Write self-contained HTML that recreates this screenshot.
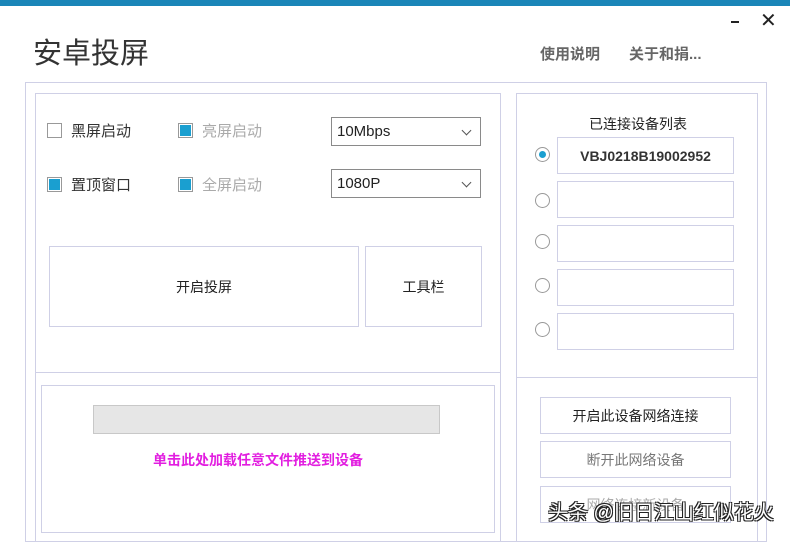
<!DOCTYPE html><html><head><meta charset="utf-8"><style>
*{margin:0;padding:0;box-sizing:border-box}
body{width:790px;height:535px;background:#fff;position:relative;overflow:hidden;font-family:"Liberation Sans","Noto Sans CJK SC",sans-serif;color:#333}
.a{position:absolute}
.b{position:absolute;border:1px solid #cfd0e6}
.cb{position:absolute;width:15px;height:15px;border:1px solid #999;background:#fff}
.cb.on::after{content:"";position:absolute;left:1px;top:1px;width:11px;height:11px;background:#1a9fd0}
.t{position:absolute;font-size:15px;white-space:nowrap}
.combo{position:absolute;border:1px solid #8a8a8a;height:29px;width:150px;font-size:15px;padding:5px 5px;color:#222}
.combo::after{content:"";position:absolute;right:10px;top:9px;width:6px;height:6px;border-right:1.3px solid #555;border-bottom:1.3px solid #555;transform:rotate(45deg)}
.btn{position:absolute;border:1px solid #cfd0e6;display:flex;align-items:center;justify-content:center;font-size:14px;color:#222;background:#fff}
.rad{position:absolute;width:15px;height:15px;border:1px solid #999;border-radius:50%;left:535px}
.tb{position:absolute;left:557px;width:177px;height:37px;border:1px solid #cfd0e6}
</style></head><body>
<div class="a" style="left:0;top:0;width:790px;height:6px;background:#1a86b8"></div>
<div class="t" style="left:33px;top:30px;font-size:29px;color:#333">安卓投屏</div>
<div class="t" style="left:540px;top:43px;font-size:15px;color:#666;font-weight:bold">使用说明</div>
<div class="t" style="left:629px;top:43px;font-size:15px;color:#666;font-weight:bold">关于和捐...</div>
<div class="a" style="left:731px;top:21px;width:8px;height:2px;background:#222"></div>
<div class="t" style="left:760px;top:8px;font-size:20px;color:#222">✕</div>
<div class="b" style="left:25px;top:82px;width:742px;height:460px"></div>
<div class="b" style="left:35px;top:93px;width:466px;height:280px"></div>
<div class="b" style="left:35px;top:372px;width:466px;height:170px"></div>
<div class="b" style="left:41px;top:385px;width:454px;height:148px"></div>
<div class="b" style="left:516px;top:93px;width:242px;height:285px"></div>
<div class="b" style="left:516px;top:377px;width:242px;height:165px"></div>
<div class="cb" style="left:47px;top:123px"></div><div class="t" style="left:71px;top:120px">黑屏启动</div>
<div class="cb on" style="left:178px;top:123px"></div><div class="t" style="left:202px;top:120px;color:#aaa">亮屏启动</div>
<div class="cb on" style="left:47px;top:177px"></div><div class="t" style="left:71px;top:174px">置顶窗口</div>
<div class="cb on" style="left:178px;top:177px"></div><div class="t" style="left:202px;top:174px;color:#aaa">全屏启动</div>
<div class="combo" style="left:331px;top:117px">10Mbps</div>
<div class="combo" style="left:331px;top:169px">1080P</div>
<div class="btn" style="left:49px;top:246px;width:310px;height:81px">开启投屏</div>
<div class="btn" style="left:365px;top:246px;width:117px;height:81px">工具栏</div>
<div class="a" style="left:93px;top:405px;width:347px;height:29px;background:#e6e6e6;border:1px solid #c8c8c8"></div>
<div class="t" style="left:153px;top:450px;font-size:14px;color:#e21ee0;font-weight:bold">单击此处加载任意文件推送到设备</div>
<div class="t" style="left:589px;top:114px;font-size:14px;color:#222">已连接设备列表</div>
<div class="rad" style="top:147px;border-color:#999"><div class="a" style="left:3px;top:3px;width:7px;height:7px;border-radius:50%;background:#1a9fd0"></div></div>
<div class="tb" style="top:137px;font-weight:bold;font-size:14px;color:#333;display:flex;align-items:center;justify-content:center">VBJ0218B19002952</div>
<div class="rad" style="top:193px"></div><div class="tb" style="top:181px"></div>
<div class="rad" style="top:234px"></div><div class="tb" style="top:225px"></div>
<div class="rad" style="top:278px"></div><div class="tb" style="top:269px"></div>
<div class="rad" style="top:322px"></div><div class="tb" style="top:313px"></div>
<div class="btn" style="left:540px;top:397px;width:191px;height:37px">开启此设备网络连接</div>
<div class="btn" style="left:540px;top:441px;width:191px;height:37px;color:#777">断开此网络设备</div>
<div class="btn" style="left:540px;top:486px;width:191px;height:37px;color:#aaa">网络连接新设备</div>
<div class="t" style="left:548px;top:496px;font-size:20px;color:#fff;text-shadow:-1px -1px 0 #222,1px -1px 0 #222,-1px 1px 0 #222,1px 1px 0 #222">头条 @旧日江山红似花火</div>
</body></html>
